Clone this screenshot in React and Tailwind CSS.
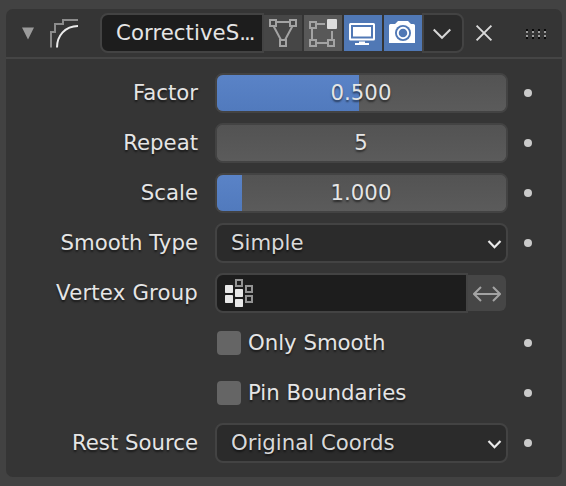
const textShadow = "[text-shadow:0_2px_2px_rgba(0,0,0,0.55)]";

function Dot() {
  return <span className="ml-[15.5px] size-[8.5px] rounded-full bg-[#cacaca]" />;
}

function Row({ label, labelClass = "", dot = true, children }) {
  return (
    <div className="flex h-[50px] items-center">
      <div className={`mr-[17px] w-[192px] whitespace-nowrap text-right ${labelClass} ${textShadow}`}>{label}</div>
      <div className="flex w-[293px] items-center">{children}</div>
      {dot && <Dot />}
    </div>
  );
}

function NumberField({ value, fill }) {
  return (
    <div className="h-[40px] w-full rounded-[8px] border-2 border-[#434343] bg-[#585858]">
      <div className="grid h-full overflow-hidden rounded-[6px] bg-linear-to-b from-[#535353] to-[#5b5b5b]">
        <div
          className="col-start-1 row-start-1 bg-linear-to-b from-[#5a83c7] to-[#517abd]"
          style={{ width: fill }}
        />
        <div className={`z-10 col-start-1 row-start-1 self-center pr-px text-center ${textShadow}`}>{value}</div>
      </div>
    </div>
  );
}

function Select({ value }) {
  return (
    <div className="flex h-[40px] w-full items-center justify-between rounded-[8px] border-2 border-[#434343] bg-[#2b2b2b] pl-[14px] pr-[4px] text-[#d9d9d9]">
      <span className={textShadow}>{value}</span>
      <svg width="15" height="12" viewBox="0 0 15 12" className="mt-[2px]" fill="none" stroke="#eaeaea" strokeWidth="2.2">
        <path d="M1.5 3 L7.5 9.2 L13.5 3" />
      </svg>
    </div>
  );
}

function Check({ label }) {
  return (
    <div className="flex items-center">
      <span className="ml-[2px] size-[24px] rounded-[4px] bg-[#656565]" />
      <span className={`ml-[7px] whitespace-nowrap ${textShadow}`}>{label}</span>
    </div>
  );
}

function SmoothIcon() {
  return (
    <svg width="30" height="30" viewBox="0 0 30 30" fill="none" strokeWidth="2">
      <path d="M2 28.5 V13 H6 V5 H14 V1 H29" stroke="#8c8c8c" />
      <path d="M8 28.5 C8 17 16 7 29 7" stroke="#ececec" />
    </svg>
  );
}

function CageIcon() {
  return (
    <svg width="38" height="36" viewBox="0 0 38 36" fill="none" stroke="#a3a3a3" strokeWidth="2">
      <path d="M12 7 H26 M9.5 11 L17 25 M28.5 11 L21 25" />
      <rect x="6" y="5" width="6" height="6" />
      <rect x="26" y="5" width="6" height="6" />
      <rect x="16" y="25" width="6" height="6" />
    </svg>
  );
}

function EditIcon() {
  return (
    <svg width="38" height="36" viewBox="0 0 38 36" fill="none" stroke="#a3a3a3" strokeWidth="2">
      <path d="M12 9 H21 M8 12 V25 M12 28 H24 M28 16 V25" />
      <rect x="6" y="7" width="6" height="6" />
      <rect x="6" y="25" width="6" height="6" />
      <rect x="24" y="25" width="6" height="6" />
      <rect x="23" y="4" width="10" height="10" rx="1" fill="#dcdcdc" stroke="none" />
    </svg>
  );
}

function DisplayIcon() {
  return (
    <svg width="38" height="36" viewBox="0 0 38 36" fill="none">
      <rect x="6" y="9" width="24" height="15.5" rx="0.5" stroke="#fff" strokeWidth="2" />
      <rect x="9" y="12" width="18" height="9.5" fill="#fff" />
      <path d="M15 26.5 H21 V28 H25 V30 H11 V28 H15 Z" fill="#fff" />
    </svg>
  );
}

function CameraIcon() {
  return (
    <svg width="38" height="36" viewBox="0 0 38 36" fill="none">
      <path d="M5 10.5 Q5 9 6.5 9 H11 L14 6 H24 L27 9 H29.5 Q31 9 31 10.5 V28 H5 Z" fill="#fff" />
      <circle cx="19" cy="18" r="8" fill="#5078b5" />
      <circle cx="19" cy="18" r="5.2" stroke="#fff" strokeWidth="1.9" />
    </svg>
  );
}

function VertexGroupIcon() {
  return (
    <svg width="28" height="28" viewBox="0 0 28 28">
      <g fill="#e8e8e8">
        <rect x="0" y="6" width="8" height="8" rx="0.7" />
        <rect x="0" y="16" width="8" height="8" rx="0.7" />
        <rect x="10" y="10" width="8" height="8" rx="0.7" />
        <rect x="10" y="20" width="8" height="8" rx="0.7" />
      </g>
      <g fill="none" stroke="#949494" strokeWidth="2">
        <rect x="11" y="1" width="6" height="6" />
        <rect x="21" y="7" width="6" height="6" />
        <rect x="21" y="17" width="6" height="6" />
      </g>
    </svg>
  );
}

function GripIcon() {
  const columns = [0, 6, 12, 18];
  return (
    <svg width="20" height="10" viewBox="0 0 20 10">
      {columns.map((x) => (
        <g key={x}>
          <rect x={x} y="0" width="2" height="2" fill="#080808" />
          <rect x={x} y="2" width="2" height="2" fill="#9b9b9b" />
          <rect x={x} y="6" width="2" height="2" fill="#9b9b9b" />
          <rect x={x} y="8" width="2" height="2" fill="#080808" />
        </g>
      ))}
    </svg>
  );
}

export default function App() {
  return (
    <div className="h-[486px] w-[566px] overflow-hidden bg-[#424242] pl-[6px] pt-[9px] font-['DejaVu_Sans',sans-serif] text-[21.25px] leading-[26px] text-[#e5e5e5]">
      <div className="h-[468px] w-[556px] rounded-[7px] bg-[#353535]">
        <div className="flex h-[50px] items-center border-b-2 border-[#454545]">
          <svg width="12" height="13" viewBox="0 0 12 13" className="ml-[16px]">
            <path d="M0 0.5 H12 L6 12.5 Z" fill="#9b9b9b" />
          </svg>
          <div className="ml-[15px] mt-[2px]">
            <SmoothIcon />
          </div>
          <div className="ml-[21px] flex h-[40px] items-center">
            <div className="flex h-[40px] w-[164px] items-center rounded-l-[8px] border-2 border-[#434343] bg-[#1d1d1d] pl-[14px]">
              <span className="tracking-[0.06px]">
                CorrectiveS<span className="tracking-[-2px]">...</span>
              </span>
            </div>
            <div className="flex h-[36px] gap-[2px]">
              <div className="bg-[#464646]"><CageIcon /></div>
              <div className="bg-[#585858]"><EditIcon /></div>
              <div className="bg-[#5078b5]"><DisplayIcon /></div>
              <div className="bg-[#5078b5]"><CameraIcon /></div>
            </div>
            <div className="flex h-[40px] w-[42px] items-center justify-center rounded-r-[8px] border-2 border-[#434343] bg-[#2b2b2b] pr-[2px] pt-px">
              <svg width="20" height="14" viewBox="0 0 20 14" fill="none" stroke="#d6d6d6" strokeWidth="2">
                <path d="M1.7 2.5 L10 10.8 L18.3 2.5" />
              </svg>
            </div>
          </div>
          <svg width="18" height="18" viewBox="0 0 18 18" className="ml-[11px]" fill="none" stroke="#dadada" strokeWidth="1.9">
            <path d="M1.6 1.6 L16.4 16.4 M16.4 1.6 L1.6 16.4" />
          </svg>
          <div className="ml-[33px] mt-[2px]">
            <GripIcon />
          </div>
        </div>

        <div className="pt-[9px]">
          <Row label="Factor"><NumberField value="0.500" fill="142px" /></Row>
          <Row label="Repeat"><NumberField value="5" fill="0px" /></Row>
          <Row label="Scale"><NumberField value="1.000" fill="25px" /></Row>
          <Row label="Smooth Type"><Select value="Simple" /></Row>
          <Row label="Vertex Group" labelClass="tracking-[0.18px]" dot={false}>
            <div className="flex h-[40px] w-[253px] shrink-0 items-center rounded-l-[8px] border-2 border-[#434343] bg-[#1d1d1d] pl-[8px]">
              <VertexGroupIcon />
            </div>
            <div className="flex h-[36px] w-[38px] shrink-0 items-center justify-center rounded-r-[6px] bg-[#464646]">
              <svg width="28" height="16" viewBox="0 0 28 16" className="mt-[2px]" fill="none" stroke="#a3a3a3" strokeWidth="2">
                <path d="M1 8 H27 M8 1 L1 8 L8 15 M20 1 L27 8 L20 15" />
              </svg>
            </div>
          </Row>
          <Row label=""><Check label="Only Smooth" /></Row>
          <Row label=""><Check label="Pin Boundaries" /></Row>
          <Row label="Rest Source"><Select value="Original Coords" /></Row>
        </div>
      </div>
    </div>
  );
}
